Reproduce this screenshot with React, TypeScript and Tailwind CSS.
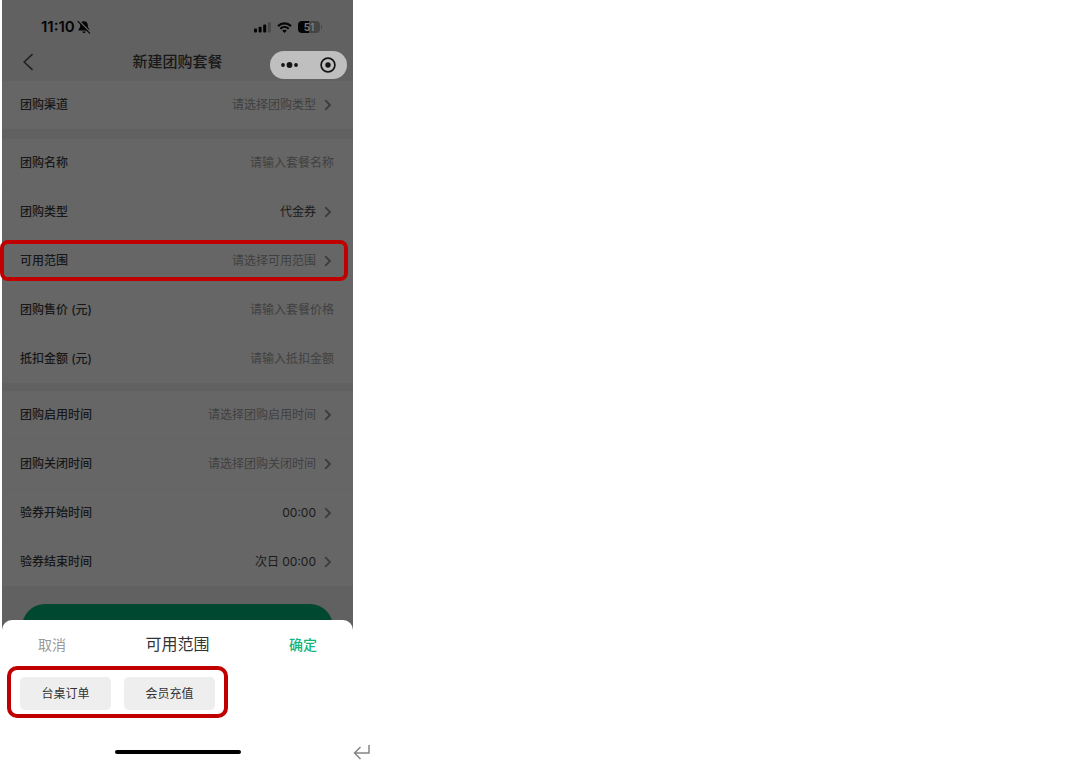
import { useState } from "react";

type Field = {
  id: string;
  label: string;
  text: string;
  kind: "select" | "input";
  filled?: boolean;
  marked?: boolean;
};

const groups: Field[][] = [
  [{ id: "channel", label: "团购渠道", text: "请选择团购类型", kind: "select" }],
  [
    { id: "name", label: "团购名称", text: "请输入套餐名称", kind: "input" },
    { id: "type", label: "团购类型", text: "代金券", kind: "select", filled: true },
    { id: "scope", label: "可用范围", text: "请选择可用范围", kind: "select", marked: true },
    { id: "price", label: "团购售价 (元)", text: "请输入套餐价格", kind: "input" },
    { id: "amount", label: "抵扣金额 (元)", text: "请输入抵扣金额", kind: "input" },
  ],
  [
    { id: "open", label: "团购启用时间", text: "请选择团购启用时间", kind: "select" },
    { id: "close", label: "团购关闭时间", text: "请选择团购关闭时间", kind: "select" },
    { id: "start", label: "验券开始时间", text: "00:00", kind: "select", filled: true },
    { id: "end", label: "验券结束时间", text: "次日 00:00", kind: "select", filled: true },
  ],
];

function BellOff() {
  return (
    <svg className="h-[14px] w-[14px]" viewBox="0 0 14 14" aria-hidden="true">
      <path d="M7 1.2c-2.4 0-3.7 1.7-3.8 3.9-.1 2.300-.6 3.300-1.500 4.200-.4.500-.2 1.200.5 1.200h9.600c.7 0 .9-.7.5-1.200-.9-.9-1.400-1.900-1.500-4.200C10.700 2.900 9.400 1.200 7 1.200zM5.300 11.400h3.400c-.1.900-.8 1.500-1.700 1.500s-1.600-.6-1.700-1.500z" fill="#050505" />
      <path d="M1.900.9l11.300 11.500" stroke="#636363" strokeWidth="1.600" />
      <path d="M1 1.300l11.600 11.800" stroke="#050505" strokeWidth="1.100" strokeLinecap="round" />
    </svg>
  );
}

function Signal() {
  return (
    <svg className="h-[11px] w-[17px]" viewBox="0 0 17 11" aria-hidden="true">
      <rect x="0" y="6.500" width="3" height="4" rx="0.900" fill="#050505" />
      <rect x="4.600" y="4.800" width="3" height="5.700" rx="0.900" fill="#050505" />
      <rect x="9.200" y="2.500" width="3" height="8" rx="0.900" fill="#050505" />
      <rect x="13.800" y="0.300" width="3" height="10.200" rx="0.900" fill="#484848" />
    </svg>
  );
}

function Wifi() {
  return (
    <svg className="h-[11px] w-[15px]" viewBox="0 0 15 11" fill="none" aria-hidden="true">
      <path d="M1 4.100C4.800.5 10.200.5 14 4.100" stroke="#050505" strokeWidth="2.200" />
      <path d="M3.300 6.700c2.400-2.300 6-2.300 8.400 0" stroke="#050505" strokeWidth="2" />
      <path d="M7.500 10.900L5.200 8.600c1.300-1.200 3.300-1.200 4.600 0z" fill="#050505" />
    </svg>
  );
}

function Battery() {
  return (
    <div className="flex items-center gap-px">
      <div className="flex h-3 w-[22px] items-center justify-center rounded-[4px] bg-linear-to-r from-[#050505] from-50% to-[#454545] to-50% text-[10px] leading-3 font-bold text-[#777777]">
        51
      </div>
      <div className="h-1 w-px rounded-r bg-[#454545]" />
    </div>
  );
}

function Chevron() {
  return (
    <svg className="h-3 w-2 shrink-0" viewBox="0 0 8 12" fill="none" aria-hidden="true">
      <path d="M1.200 1.200L6 6l-4.800 4.800" stroke="#3c3c3c" strokeWidth="1.800" />
    </svg>
  );
}

function Row({ field }: { field: Field }) {
  return (
    <div className="relative border-b border-[#646464] last:border-b-0">
      <div className="flex h-12 items-center justify-between gap-3 pr-[19px] pl-[18px] text-[12px]">
        <label id={`${field.id}-label`} htmlFor={field.id} className="shrink-0 font-medium text-[#181818]">
          {field.label}
        </label>
        {field.kind === "input" ? (
          <input
            id={field.id}
            placeholder={field.text}
            className="w-full min-w-0 bg-transparent text-right outline-none placeholder:text-[#404040]"
          />
        ) : (
          <button id={field.id} type="button" className="flex items-center gap-2 pr-[2px]">
            <span className={field.filled ? "text-[#1a1a1a]" : "text-[#404040]"}>{field.text}</span>
            <Chevron />
          </button>
        )}
      </div>
      {field.marked && (
        <div className="pointer-events-none absolute top-[3px] right-[5px] -left-[2px] h-[41px] rounded-[8px] border-4 border-[#c00000]" />
      )}
    </div>
  );
}

export default function App() {
  const [scope, setScope] = useState<string | null>(null);

  return (
    <div className="flex items-end bg-white pl-[2px] font-['Inter','Noto_Sans_CJK_SC',sans-serif]">
      <main className="flex w-full max-w-[351px] flex-col bg-[#616161]">
        <header>
          <div className="flex items-center justify-between pt-[18px] pr-[31px] pl-[39px]">
            <div className="flex items-center gap-[2px] text-[15px] leading-[18px] font-semibold text-[#050505]">
              <span>11:10</span>
              <BellOff />
            </div>
            <div className="flex items-center gap-[6px]">
              <Signal />
              <Wifi />
              <Battery />
            </div>
          </div>
          <div className="grid h-[45px] grid-cols-[1fr_auto_1fr] items-center px-[6px] pt-[7px]">
            <button type="button" aria-label="返回" className="ml-[14px] w-fit">
              <svg className="h-[18px] w-3" viewBox="0 0 12 18" fill="none" aria-hidden="true">
                <path d="M10.500 1.200L2.200 9l8.300 7.800" stroke="#222222" strokeWidth="1.600" />
              </svg>
            </button>
            <h1 className="text-[15px] font-medium text-[#181818]">新建团购套餐</h1>
            <div className="mt-[6px] flex h-7 w-[77px] items-center justify-between justify-self-end rounded-full bg-[#bfbfbf] px-[11px]">
              <button type="button" aria-label="更多">
                <svg className="h-2 w-[18px]" viewBox="0 0 18 8" fill="#151515" aria-hidden="true">
                  <circle cx="2" cy="4" r="1.900" />
                  <circle cx="8.500" cy="4" r="2.900" />
                  <circle cx="15" cy="4" r="1.900" />
                </svg>
              </button>
              <button type="button" aria-label="关闭">
                <svg className="h-4 w-4" viewBox="0 0 16 16" fill="none" aria-hidden="true">
                  <circle cx="8" cy="8" r="6.900" stroke="#151515" strokeWidth="1.700" />
                  <circle cx="8" cy="8" r="2.700" fill="#151515" />
                </svg>
              </button>
            </div>
          </div>
        </header>

        <form>
          <div className="bg-[#666666]">
            <Row field={groups[0][0]} />
          </div>
          <div className="mt-[10px] bg-[#666666]">
            {groups[1].map((field) => (
              <Row key={field.id} field={field} />
            ))}
          </div>
          <div className="mt-2 bg-[#666666]">
            {groups[2].map((field) => (
              <Row key={field.id} field={field} />
            ))}
          </div>
          <div className="px-5 pt-[18px]">
            <button type="button" aria-label="保存" className="block h-[46px] w-full rounded-full bg-[#004830]" />
          </div>
        </form>

        <section className="relative -mt-[30px] flex flex-col rounded-t-[10px] bg-white pb-2">
          <div className="flex h-[46px] items-center justify-between px-9 pt-[2px] text-[14px]">
            <button type="button" className="text-[#999999]">取消</button>
            <h2 className="text-[16px] text-[#333333]">可用范围</h2>
            <button type="button" className="font-medium text-[#12b57c]">确定</button>
          </div>
          <div className="ml-[5px] flex w-fit gap-[13px] rounded-[10px] border-4 border-[#c00000] px-[9px] pt-[7px] pb-1">
            {["台桌订单", "会员充值"].map((name) => (
              <button
                key={name}
                type="button"
                aria-pressed={scope === name}
                onClick={() => setScope(name)}
                className="h-[33px] w-[91px] rounded-[5px] bg-[#eeeeee] text-[12px] text-[#333333]"
              >
                {name}
              </button>
            ))}
          </div>
          <div className="mt-8 h-1 w-[126px] self-center rounded-full bg-black" />
        </section>
      </main>
      <svg className="mb-[2px] h-4 w-[17px] shrink-0" viewBox="0 0 17 16" fill="none" aria-hidden="true">
        <path d="M16 1v8H1.500M7.500 3l-6 6 6 6" stroke="#858585" strokeWidth="1.500" />
      </svg>
    </div>
  );
}
